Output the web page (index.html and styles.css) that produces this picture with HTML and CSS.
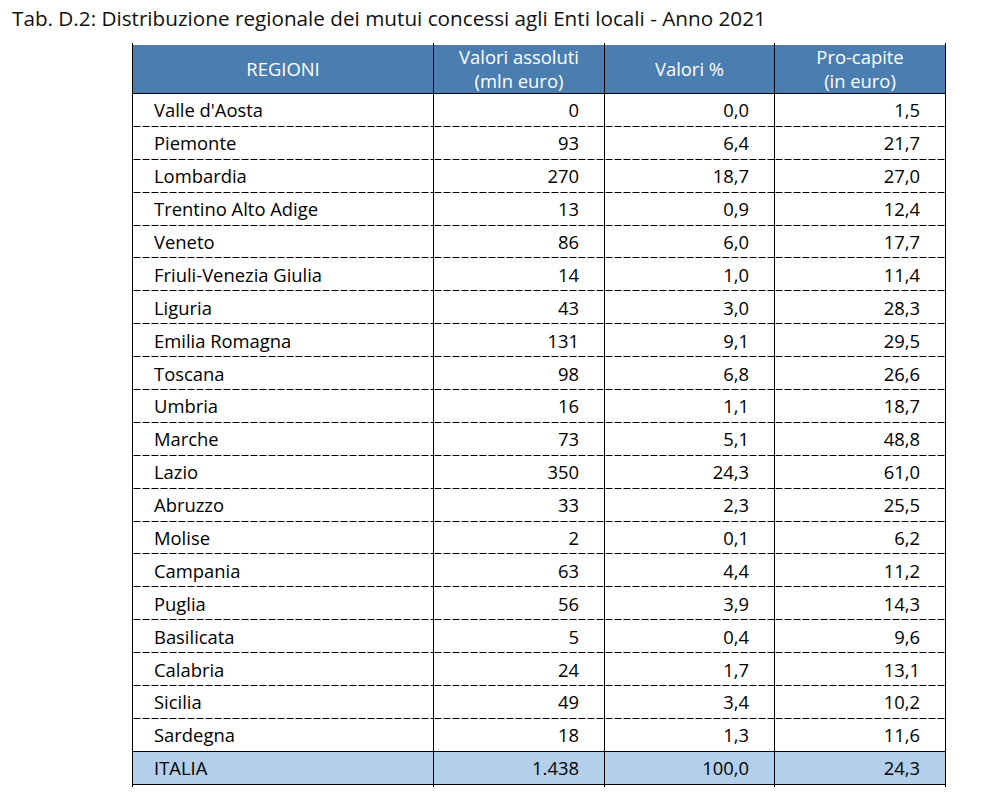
FILE: index.html
```html
<!DOCTYPE html>
<html lang="it">
<head>
<meta charset="utf-8">
<title>Tab. D.2</title>
<link rel="stylesheet" href="styles.css">
</head>
<body>
<h1 class="title">Tab. D.2: Distribuzione regionale dei mutui concessi agli Enti locali - Anno 2021</h1>
<table class="tab">
  <colgroup>
    <col class="c1"><col class="c2"><col class="c3"><col class="c4">
  </colgroup>
  <tbody>
    <tr class="cap"><td></td><td></td><td></td><td></td></tr>
    <tr class="head">
      <th>REGIONI</th>
      <th>Valori assoluti<br>(mln euro)</th>
      <th>Valori %</th>
      <th>Pro-capite<br>(in euro)</th>
    </tr>
    <tr><td>Valle d'Aosta</td><td>0</td><td>0,0</td><td>1,5</td></tr>
    <tr><td>Piemonte</td><td>93</td><td>6,4</td><td>21,7</td></tr>
    <tr><td>Lombardia</td><td>270</td><td>18,7</td><td>27,0</td></tr>
    <tr><td>Trentino Alto Adige</td><td>13</td><td>0,9</td><td>12,4</td></tr>
    <tr><td>Veneto</td><td>86</td><td>6,0</td><td>17,7</td></tr>
    <tr><td>Friuli-Venezia Giulia</td><td>14</td><td>1,0</td><td>11,4</td></tr>
    <tr><td>Liguria</td><td>43</td><td>3,0</td><td>28,3</td></tr>
    <tr><td>Emilia Romagna</td><td>131</td><td>9,1</td><td>29,5</td></tr>
    <tr><td>Toscana</td><td>98</td><td>6,8</td><td>26,6</td></tr>
    <tr><td>Umbria</td><td>16</td><td>1,1</td><td>18,7</td></tr>
    <tr><td>Marche</td><td>73</td><td>5,1</td><td>48,8</td></tr>
    <tr><td>Lazio</td><td>350</td><td>24,3</td><td>61,0</td></tr>
    <tr><td>Abruzzo</td><td>33</td><td>2,3</td><td>25,5</td></tr>
    <tr><td>Molise</td><td>2</td><td>0,1</td><td>6,2</td></tr>
    <tr><td>Campania</td><td>63</td><td>4,4</td><td>11,2</td></tr>
    <tr><td>Puglia</td><td>56</td><td>3,9</td><td>14,3</td></tr>
    <tr><td>Basilicata</td><td>5</td><td>0,4</td><td>9,6</td></tr>
    <tr><td>Calabria</td><td>24</td><td>1,7</td><td>13,1</td></tr>
    <tr><td>Sicilia</td><td>49</td><td>3,4</td><td>10,2</td></tr>
    <tr class="last"><td>Sardegna</td><td>18</td><td>1,3</td><td>11,6</td></tr>
    <tr class="total"><td>ITALIA</td><td>1.438</td><td>100,0</td><td>24,3</td></tr>
    <tr class="cap"><td></td><td></td><td></td><td></td></tr>
  </tbody>
</table>
</body>
</html>
```

FILE: styles.css
```css
html, body {
  margin: 0;
  padding: 0;
  background: #ffffff;
}
body {
  font-family: "Open Sans", "Noto Sans", "DejaVu Sans", sans-serif;
  color: #000000;
}
.title {
  margin: 0;
  padding: 4px 0 0 12px;
  font-size: 20.7px;
  font-weight: 400;
  line-height: 28px;
  color: #111111;
  letter-spacing: 0;
}
.tab {
  margin: 11px 0 0 132px;
  border-collapse: collapse;
  table-layout: fixed;
  width: 813px;
  font-size: 18.4px;
}
.c1 { width: 301px; }
.c2 { width: 171px; }
.c3 { width: 170px; }
.c4 { width: 171px; }
.tab td, .tab th {
  border-left: 1px solid #000;
  border-right: 1px solid #000;
  padding: 0 25px 0 0;
  height: 32.9px;
  text-align: right;
  font-weight: 400;
  line-height: 22px;
  background-image: linear-gradient(to right, #000 7px, transparent 7px);
  background-size: 9px 1px;
  background-position: left bottom;
  background-repeat: repeat-x;
}
.tab td:first-child {
  text-align: left;
  padding: 0 0 0 21px;
}
.tab tr.cap td {
  height: 2px;
  padding: 0;
  background: transparent;
}
.tab tr.head th {
  background: #4a7eb0;
  color: #ffffff;
  text-align: center;
  padding: 0;
  height: 48px;
  line-height: 24px;
  border-bottom: 1px solid #000;
}
.tab tr.last td {
  background-image: none;
  border-bottom: 1px solid #000;
  height: 31.9px;
}
.tab tr.total td {
  background: #b3cfec;
  border-bottom: 1px solid #000;
  height: 32px;
}
```
